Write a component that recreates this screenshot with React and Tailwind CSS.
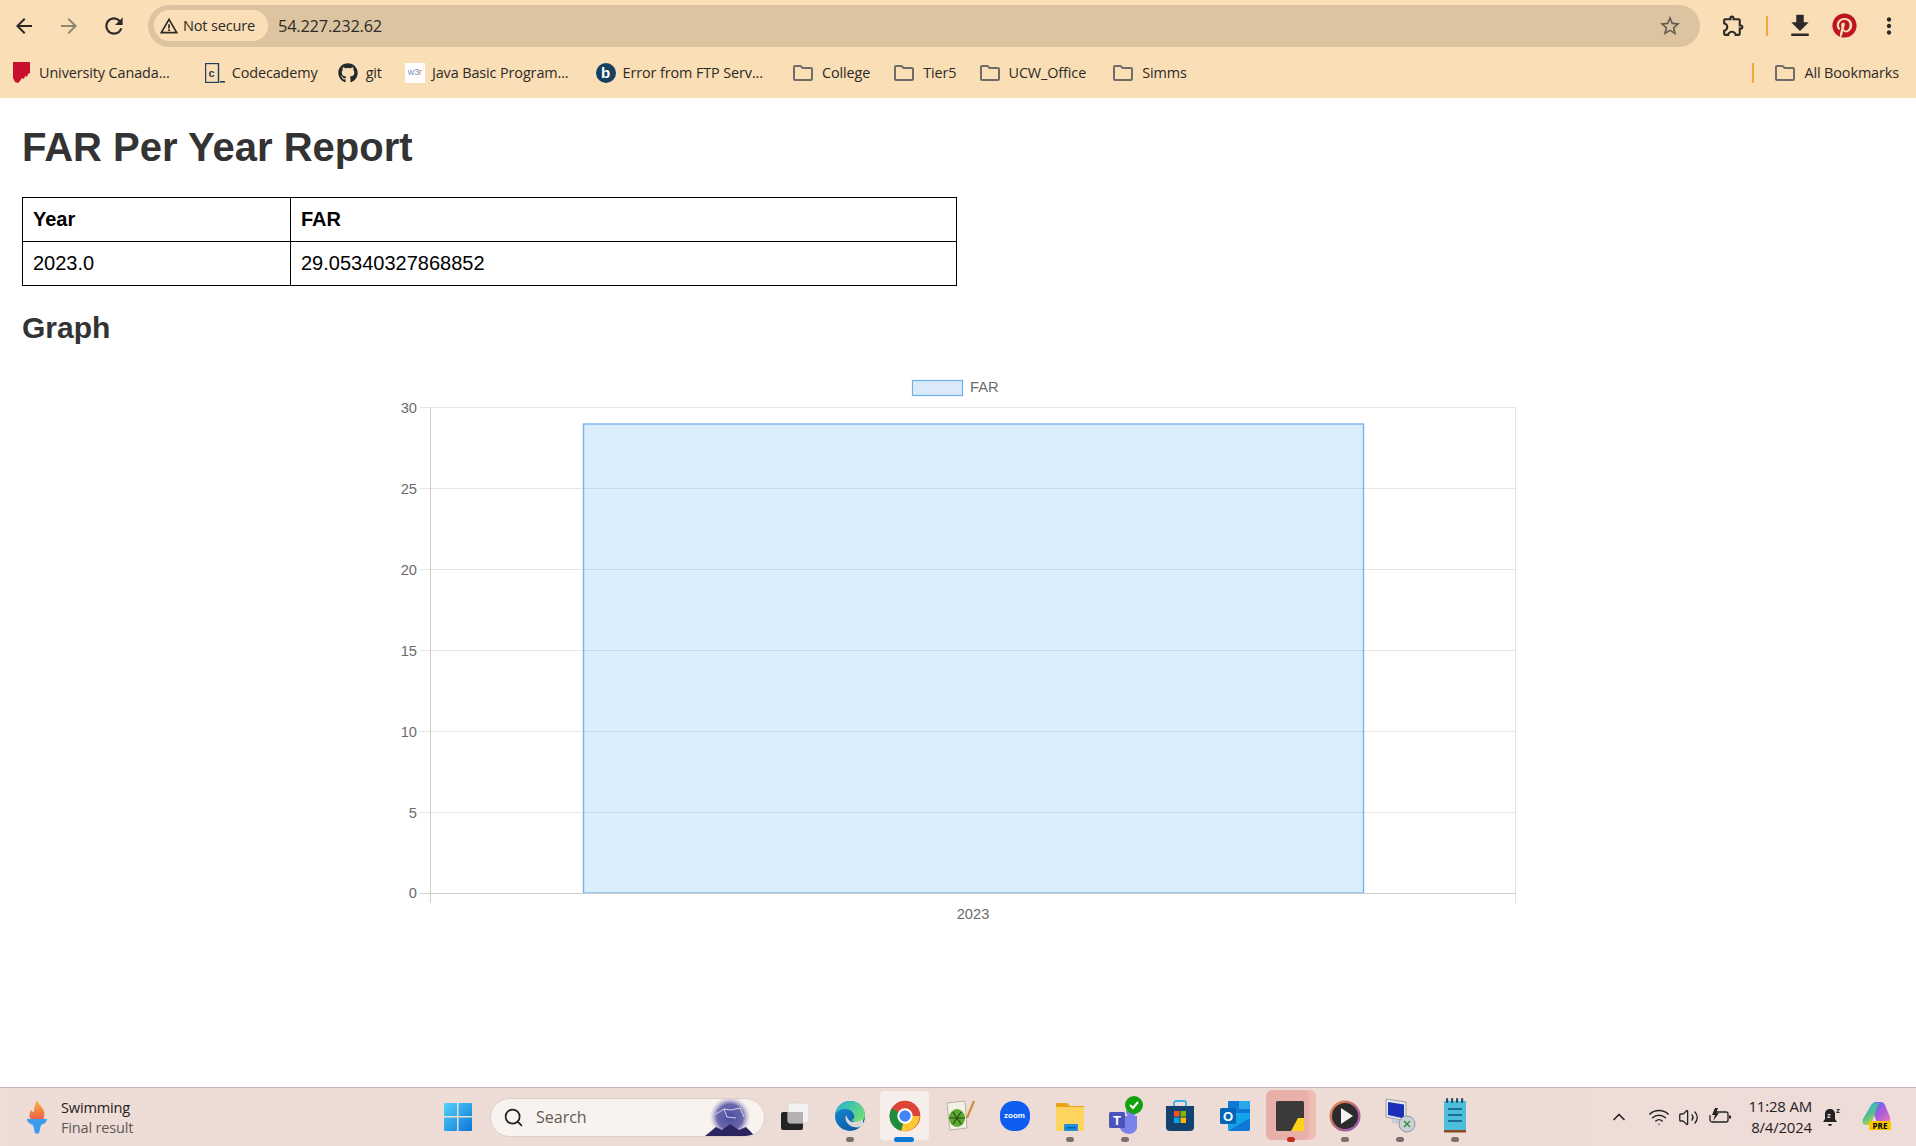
import { FaGithub, FaPinterest } from "react-icons/fa"
import {
  MdArrowBack,
  MdArrowForward,
  MdFileDownload,
  MdMoreVert,
  MdOutlineExtension,
  MdOutlineFolder,
  MdRefresh,
  MdStarBorder,
  MdWarningAmber,
} from "react-icons/md"
import { ChevronUp, Search, Wifi, Volume2 } from "lucide-react"

const uiFont = "font-['Open_Sans','Noto_Sans',sans-serif]"

function UniversityIcon() {
  return (
    <svg width="18" height="22" viewBox="0 0 18 22">
      <path d="M0 0h17v11l-2 1-1 3-2-1-1 3-2-1-2 3-2 2-3-1-2-4z" fill="#c8102e" />
    </svg>
  )
}

function CodecademyIcon() {
  return (
    <svg width="20" height="20" viewBox="0 0 20 20">
      <rect x="0.5" y="0.5" width="13" height="19" fill="none" stroke="#1f4056" strokeWidth="1.4" />
      <text x="3.5" y="14" fontSize="11" fontWeight="700" fill="#1f4056" fontFamily="Liberation Sans">c</text>
      <rect x="15" y="18" width="5" height="1.6" fill="#1f4056" />
    </svg>
  )
}

function W3Icon() {
  return (
    <div className="w-5 h-5 bg-white flex items-center justify-center text-[9px] font-['Liberation_Sans',sans-serif]">
      <span className="text-[#6b8ec7]">w3</span>
      <span className="text-[#e2735a]">r</span>
    </div>
  )
}

function BingBadge() {
  return (
    <div className="w-5 h-5 rounded-full bg-[#17405f] flex items-center justify-center text-white text-[15px] font-bold leading-none font-['Liberation_Sans',sans-serif]">
      b
    </div>
  )
}

function FolderIcon() {
  return <MdOutlineFolder className="w-6 h-6 text-[#6f6d69]" />
}

function Bookmark({ icon, label, className }) {
  return (
    <div className={`flex items-center shrink-0 ${className}`}>
      {icon}
      <span className="whitespace-nowrap">{label}</span>
    </div>
  )
}

function BrowserChrome() {
  return (
    <div className={`h-[98px] bg-[#fadeb5] shrink-0 ${uiFont} text-[#2c2a28]`}>
      <div className="h-[51px] flex items-center">
        <MdArrowBack className="w-[24px] h-[24px] ml-[12px] text-[#2b2a28]" />
        <MdArrowForward className="w-[24px] h-[24px] ml-[21px] text-[#8f8573]" />
        <MdRefresh className="w-[26px] h-[26px] ml-[20px] text-[#2b2a28]" />
        <div className="w-[1552px] h-[42px] ml-[21px] rounded-full bg-[#dcc4a1] flex items-center pl-[6px]">
          <div className="w-[114px] h-[31px] rounded-full bg-[#fadeb5] flex items-center pl-[5px] text-[14.6px] font-medium tracking-[-0.2px]">
            <MdWarningAmber className="w-[20px] h-[20px] mr-[4px]" />
            Not secure
          </div>
          <span className="ml-[10px] pt-[1px] text-[16.4px] tracking-[-0.2px]">54.227.232.62</span>
          <MdStarBorder className="w-[24px] h-[24px] ml-auto mr-[18px] text-[#615b52]" />
        </div>
        <MdOutlineExtension className="w-[25px] h-[25px] ml-[21px]" />
        <div className="w-[2px] h-[20px] ml-[20px] bg-[#f2a93c]" />
        <MdFileDownload className="w-[30px] h-[30px] ml-[17px]" />
        <FaPinterest className="w-[25px] h-[25px] ml-[17px] text-[#bd1622]" />
        <MdMoreVert className="w-[26px] h-[26px] ml-[19px]" />
      </div>
      <div className="h-[44px] flex items-center text-[14.4px] tracking-[-0.1px]">
        <Bookmark className="ml-[13px]" icon={<span className="mr-[8px] flex"><UniversityIcon /></span>} label="University Canada..." />
        <Bookmark className="ml-[35px]" icon={<span className="mr-[7px] flex"><CodecademyIcon /></span>} label="Codecademy" />
        <Bookmark className="ml-[20px]" icon={<FaGithub className="w-5 h-5 mr-[8px] text-[#24292e]" />} label="git" />
        <Bookmark className="ml-[23px]" icon={<span className="mr-[7px] flex"><W3Icon /></span>} label="Java Basic Program..." />
        <Bookmark className="ml-[27px]" icon={<span className="mr-[7px] flex"><BingBadge /></span>} label="Error from FTP Serv..." />
        <Bookmark className="ml-[28px]" icon={<span className="mr-[7px] flex"><FolderIcon /></span>} label="College" />
        <Bookmark className="ml-[22px]" icon={<span className="mr-[7px] flex"><FolderIcon /></span>} label="Tier5" />
        <Bookmark className="ml-[21px]" icon={<span className="mr-[7px] flex"><FolderIcon /></span>} label="UCW_Office" />
        <Bookmark className="ml-[25px]" icon={<span className="mr-[7px] flex"><FolderIcon /></span>} label="Simms" />
        <div className="w-[2px] h-[20px] ml-auto bg-[#f2a93c]" />
        <Bookmark className="ml-[19px] mr-[17px]" icon={<span className="mr-[7px] flex"><FolderIcon /></span>} label="All Bookmarks" />
      </div>
    </div>
  )
}

function ReportTable() {
  return (
    <table className="w-[935px] border-collapse text-[20px] text-black table-fixed">
      <thead>
        <tr className="h-[44px]">
          <th className="w-[268px] border border-black pl-[10px] pb-[2px] text-left font-bold">Year</th>
          <th className="border border-black pl-[10px] pb-[2px] text-left font-bold">FAR</th>
        </tr>
      </thead>
      <tbody>
        <tr className="h-[44px]">
          <td className="border border-black pl-[10px] pb-[2px]">2023.0</td>
          <td className="border border-black pl-[10px] pb-[2px]">29.05340327868852</td>
        </tr>
      </tbody>
    </table>
  )
}

// chart is drawn in page coordinates: viewBox starts at x 380, y 370
function FarChart() {
  const ticks = [
    { label: "30", y: 408.5 },
    { label: "25", y: 489.5 },
    { label: "20", y: 570.5 },
    { label: "15", y: 651.5 },
    { label: "10", y: 732.5 },
    { label: "5", y: 813.5 },
  ]
  return (
    <svg width="1160" height="560" viewBox="380 370 1160 560" className="ml-[358px] mt-[24px] block">
      <g fontFamily="Liberation Sans" fontSize="14.67" fill="#6b6b6b">
        <rect x="912.5" y="381.5" width="50" height="15" fill="#dbeafa" stroke="#6db0ee" strokeWidth="1.2" />
        <text x="970" y="393">FAR</text>
        {ticks.map((t) => (
          <g key={t.label}>
            <line x1="420" x2="1516" y1={t.y} y2={t.y} stroke="#e5e5e5" />
            <text x="417" y={t.y + 5} textAnchor="end">{t.label}</text>
          </g>
        ))}
        <text x="417" y="899" textAnchor="end">0</text>
        <text x="973" y="920" textAnchor="middle">2023</text>
      </g>
      <line x1="430.5" x2="430.5" y1="408" y2="904" stroke="#cfcfcf" />
      <line x1="1515.5" x2="1515.5" y1="408" y2="904" stroke="#e5e5e5" />
      <rect x="583.5" y="425" width="780" height="469" fill="rgba(70,160,235,0.19)" stroke="#78b5ee" strokeWidth="1.4" />
      <line x1="420" x2="1516" y1="894.5" y2="894.5" stroke="#cfcfcf" />
    </svg>
  )
}

function TorchIcon() {
  return (
    <svg width="24" height="34" viewBox="0 0 24 34">
      <defs>
        <linearGradient id="flame" x1="0" y1="0" x2="0" y2="1">
          <stop offset="0" stopColor="#f6b73c" />
          <stop offset="1" stopColor="#ee5d4a" />
        </linearGradient>
      </defs>
      <path d="M12 0c1 4 5 6 7 11 1 3 0 7-1 9H6c-2-3-2-7 0-10 1 1 2 2 3 2 0-4 1-8 3-12z" fill="url(#flame)" />
      <path d="M2 19h20c0 3-3 5-6 6l-2 8c-1 1-3 1-4 0l-2-8c-3-1-6-3-6-6z" fill="#3b9bec" />
    </svg>
  )
}

function WindowsIcon() {
  return (
    <svg width="30" height="30" viewBox="0 0 30 30">
      <defs>
        <linearGradient id="win" x1="0" y1="0" x2="1" y2="1">
          <stop offset="0" stopColor="#55d3fb" />
          <stop offset="1" stopColor="#0a74d6" />
        </linearGradient>
      </defs>
      <path d="M1 2a1 1 0 0 1 1-1h12v13H1zM15.500 1H28a1 1 0 0 1 1 1v12H15.500zM1 15.500h13V29H2a1 1 0 0 1-1-1zM15.500 15.500H29V28a1 1 0 0 1-1 1H15.500z" fill="url(#win)" />
    </svg>
  )
}

function NightBadge() {
  return (
    <svg width="52" height="38" viewBox="0 0 52 38">
      <defs>
        <radialGradient id="sky" cx="0.5" cy="0.5" r="0.5">
          <stop offset="0" stopColor="#4a4f9e" />
          <stop offset="0.65" stopColor="#6a68ac" />
          <stop offset="1" stopColor="#d9cfe0" stopOpacity="0.2" />
        </radialGradient>
      </defs>
      <circle cx="26" cy="19" r="20" fill="url(#sky)" />
      <path d="M12 16l8-5 7 1 9-2 4 9M20 11l3 8 9 1" stroke="#f2ecff" strokeWidth="0.8" fill="none" />
      <path d="M1 38l11-9 6 3 8-6 9 6 7-3 9 9z" fill="#2c2560" />
    </svg>
  )
}

function TaskViewIcon() {
  return (
    <svg width="30" height="30" viewBox="0 0 30 30">
      <rect x="1" y="11" width="22" height="18" rx="2" fill="#232323" />
      <rect x="8" y="2" width="21" height="20" rx="2" fill="#f4f2f1" stroke="#dcd6d3" />
      <rect x="8" y="11" width="15" height="11" fill="#aaa6a5" opacity="0.85" />
    </svg>
  )
}

function EdgeIcon() {
  return (
    <svg width="32" height="32" viewBox="0 0 32 32">
      <defs>
        <linearGradient id="edgeA" x1="0" y1="0" x2="1" y2="0.6">
          <stop offset="0" stopColor="#1fb0d8" />
          <stop offset="1" stopColor="#6fdc7a" />
        </linearGradient>
        <linearGradient id="edgeB" x1="0" y1="0" x2="0.6" y2="1">
          <stop offset="0" stopColor="#1a8fd8" />
          <stop offset="1" stopColor="#0a5ca8" />
        </linearGradient>
      </defs>
      <circle cx="16" cy="16" r="15" fill="url(#edgeB)" />
      <path d="M1.500 14C3 6 9 1 16 1c8 0 15 6 15 14 0 5-4 7-8 7-3 0-5-1-5-2 2-1 3-3 2-5-1-4-5-6-9-6-4 0-8 2-10 5z" fill="url(#edgeA)" />
      <path d="M12 15c-2 5 2 11 8 12 3 1 7 0 9-2v-6c-3 3-8 3-11 3-3-1-5-4-6-7z" fill="#f1e2dc" opacity="0.9" />
    </svg>
  )
}

function ChromeIcon() {
  return (
    <svg width="32" height="32" viewBox="0 0 48 48">
      <circle cx="24" cy="24" r="23" fill="#db4437" />
      <path d="M24 24h22A23 23 0 0 1 18 46.300z" fill="#fcc934" />
      <path d="M24 24 18 46.300A23 23 0 0 1 4 12.500z" fill="#1e8e3e" />
      <circle cx="24" cy="24" r="11.500" fill="#fff" />
      <circle cx="24" cy="24" r="8.500" fill="#4285f4" />
    </svg>
  )
}

function NotepadPlusIcon() {
  return (
    <svg width="32" height="34" viewBox="0 0 32 34">
      <path d="M3 4l18-2 2 27-17 2z" fill="#f3f1e6" stroke="#b9b4a4" />
      <ellipse cx="13" cy="19" rx="8" ry="9" fill="#5aa82f" />
      <path d="M9 13l8 12M17 13l-8 12M5 19h16" stroke="#274d14" strokeWidth="1.2" />
      <path d="M30 2l-7 17" stroke="#c98a34" strokeWidth="2" />
    </svg>
  )
}

function ZoomIcon() {
  return (
    <div className="w-[30px] h-[30px] rounded-[45%] bg-[#0f5cf0] flex items-center justify-center text-white text-[8px] font-bold font-['Liberation_Sans',sans-serif]">
      zoom
    </div>
  )
}

function FilesIcon() {
  return (
    <svg width="32" height="32" viewBox="0 0 32 32">
      <path d="M2 3h11l3 3h14v6H2z" fill="#e8a317" />
      <rect x="2" y="7" width="28" height="24" fill="#fcd45e" />
      <rect x="10" y="24" width="14" height="7" rx="1" fill="#1b8fe0" />
      <rect x="12" y="27" width="10" height="1.500" fill="#0d5ea6" />
    </svg>
  )
}

function TeamsIcon() {
  return (
    <svg width="36" height="40" viewBox="0 0 36 40">
      <circle cx="24" cy="16" r="5" fill="#7b83eb" />
      <path d="M13 20h17v11c0 4-4 7-8 7s-9-3-9-7z" fill="#7b83eb" />
      <rect x="2" y="16" width="16" height="16" rx="1.500" fill="#4b53bc" />
      <text x="10" y="29" textAnchor="middle" fontSize="13" fontWeight="700" fill="#fff" fontFamily="Liberation Sans">T</text>
      <circle cx="27" cy="9" r="9" fill="#13a10e" />
      <path d="M23 9l3 3 5-6" stroke="#fff" strokeWidth="2" fill="none" />
    </svg>
  )
}

function StoreIcon() {
  return (
    <svg width="30" height="32" viewBox="0 0 30 32">
      <path d="M9 6V3a2 2 0 0 1 2-2h8a2 2 0 0 1 2 2v3" stroke="#3bb1e6" strokeWidth="1.800" fill="none" />
      <path d="M1 6h28v21a4 4 0 0 1-4 4H5a4 4 0 0 1-4-4z" fill="#14426f" />
      <rect x="9" y="11" width="5.500" height="5.500" fill="#f25022" />
      <rect x="15.500" y="11" width="5.500" height="5.500" fill="#7fba00" />
      <rect x="9" y="17.500" width="5.500" height="5.500" fill="#00a4ef" />
      <rect x="15.500" y="17.500" width="5.500" height="5.500" fill="#ffb900" />
    </svg>
  )
}

function OutlookIcon() {
  return (
    <svg width="32" height="32" viewBox="0 0 32 32">
      <rect x="9" y="1" width="22" height="16" rx="1" fill="#0f78d4" />
      <rect x="20" y="1" width="11" height="8" fill="#28a8ea" />
      <path d="M9 13l22 0v16a2 2 0 0 1-2 2H11a2 2 0 0 1-2-2z" fill="#14a3e8" />
      <path d="M9 31l22-13v11a2 2 0 0 1-2 2z" fill="#0f78d4" />
      <rect x="1" y="8" width="16" height="16" rx="1.500" fill="#0364b8" />
      <text x="9" y="21" textAnchor="middle" fontSize="13" fontWeight="700" fill="#fff" fontFamily="Liberation Sans">O</text>
    </svg>
  )
}

function StickyIcon() {
  return (
    <svg width="28" height="30" viewBox="0 0 28 30">
      <rect width="28" height="30" rx="1.500" fill="#3b3a39" />
      <path d="M15 30l7-13h6v13z" fill="#fcd116" />
    </svg>
  )
}

function PlayerIcon() {
  return (
    <svg width="32" height="32" viewBox="0 0 32 32">
      <defs>
        <linearGradient id="ring" x1="0" y1="0" x2="1" y2="1">
          <stop offset="0" stopColor="#f08a3c" />
          <stop offset="1" stopColor="#8a4fc4" />
        </linearGradient>
      </defs>
      <circle cx="16" cy="16" r="15.500" fill="url(#ring)" />
      <circle cx="16" cy="16" r="13" fill="#2c2b2b" />
      <path d="M12 8l12 8-12 8z" fill="#f4f4f4" />
    </svg>
  )
}

function RemoteIcon() {
  return (
    <svg width="32" height="36" viewBox="0 0 32 36">
      <path d="M2 1l20 3v19L2 19z" fill="#e5e7ea" stroke="#9aa0a6" />
      <path d="M4 4l16 2.500v14L4 17z" fill="#1b2fb8" />
      <path d="M8 21l8 1v4l-8-1z" fill="#c8ccd0" />
      <circle cx="23" cy="26" r="8" fill="#c9d1d3" stroke="#8e9a9c" />
      <path d="M20 23l3 3-3 3M26 23l-3 3 3 3" stroke="#2f8a3a" strokeWidth="1.300" fill="none" />
    </svg>
  )
}

function NotepadIcon() {
  return (
    <svg width="24" height="36" viewBox="0 0 24 36">
      <rect x="1" y="3" width="22" height="29" fill="#4dbfdc" />
      <rect x="1" y="32" width="22" height="2.500" fill="#8a4b22" />
      <g fill="#23506a">
        <rect x="3" y="0" width="2.200" height="5" rx="1" />
        <rect x="8" y="0" width="2.200" height="5" rx="1" />
        <rect x="13" y="0" width="2.200" height="5" rx="1" />
        <rect x="18" y="0" width="2.200" height="5" rx="1" />
      </g>
      <g fill="#1f6d8e">
        <rect x="5" y="10" width="14" height="2" />
        <rect x="5" y="16" width="14" height="2" />
        <rect x="5" y="22" width="14" height="2" />
      </g>
    </svg>
  )
}

function BatteryIcon() {
  return (
    <svg width="22" height="20" viewBox="0 0 22 20" fill="none" stroke="#222" strokeWidth="1.300">
      <path d="M7 5h10a2 2 0 0 1 2 2v6a2 2 0 0 1-2 2H3a2 2 0 0 1-2-2V8" />
      <path d="M21 8.500v3" strokeWidth="2" />
      <path d="M6 1 3 8h3l-2 6 6-8H7l2-5z" fill="#222" stroke="none" />
    </svg>
  )
}

function SnoozeBell() {
  return (
    <svg width="20" height="24" viewBox="0 0 20 24">
      <path d="M8 4c3 0 5 2 5 5v5l2 3H1l2-3V9c0-3 2-5 5-5zM6 19h4a2 2 0 0 1-4 0z" fill="#222" />
      <text x="5" y="13" fontSize="7.500" fontWeight="700" fill="#eedcd6" fontFamily="Liberation Sans">z</text>
      <text x="14" y="8" fontSize="8" fontWeight="700" fill="#222" fontFamily="Liberation Sans">z</text>
    </svg>
  )
}

function CopilotIcon() {
  return (
    <svg width="30" height="24" viewBox="0 0 30 24">
      <defs>
        <linearGradient id="copL" x1="0" y1="0" x2="0.6" y2="1">
          <stop offset="0" stopColor="#2aa7f0" />
          <stop offset="0.55" stopColor="#4fc28a" />
          <stop offset="1" stopColor="#d4d64a" />
        </linearGradient>
        <linearGradient id="copR" x1="0" y1="0" x2="1" y2="1">
          <stop offset="0" stopColor="#3a6ff0" />
          <stop offset="0.5" stopColor="#a65be0" />
          <stop offset="1" stopColor="#ee7ab4" />
        </linearGradient>
      </defs>
      <path d="M9 4C10 2 12 0 14 0h5c2 0 3 1 4 3l5 12c1 3-1 6-4 6h-6c-2 0-3-1-4-3z" fill="url(#copR)" />
      <path d="M8 5c1-2 2-4 5-4h6c-2 0-3 2-4 4l-4 12c-1 3-2 6-5 6H4c-3 0-4-3-3-6z" fill="url(#copL)" />
    </svg>
  )
}

function TaskIcon({ children, active, dot }) {
  return (
    <div className="relative w-[55px] h-[54px] flex items-center justify-center">
      {active === "chrome" && (
        <div className="absolute left-[3px] top-[1px] w-[49px] h-[49px] rounded-[4px] bg-[#f6eeea]" />
      )}
      {active === "sticky" && (
        <>
          <div className="absolute left-[11px] top-0 w-[43px] h-[50px] rounded-[6px] bg-[#f0bdb4]" />
          <div className="absolute left-[4px] top-0 w-[43px] h-[50px] rounded-[6px] bg-[#e9b0aa]" />
        </>
      )}
      <div className="relative mb-[3px] flex">{children}</div>
      {dot === "gray" && <div className="absolute left-[24px] bottom-[2px] w-[8px] h-[5px] rounded-full bg-[#77706d]" />}
      {dot === "blue" && <div className="absolute left-[17px] bottom-[2px] w-[20px] h-[5px] rounded-full bg-[#0a78d4]" />}
      {dot === "red" && <div className="absolute left-[25px] bottom-[2px] w-[8px] h-[5px] rounded-full bg-[#c42b1c]" />}
    </div>
  )
}

function Taskbar() {
  return (
    <div className={`h-[59px] shrink-0 border-t border-[#c9b8b2] bg-[linear-gradient(90deg,#eedcd6_0%,#eddcd5_50%,#eedcd8_100%)] flex items-center ${uiFont} text-[#24211f]`}>
      <div className="ml-[25px] flex"><TorchIcon /></div>
      <div className="ml-[12px] w-[120px] pb-[1px] text-[14.6px] leading-[20px] tracking-[-0.2px]">
        <div>Swimming</div>
        <div className="text-[#5f5a57]">Final result</div>
      </div>
      <div className="ml-[262px] flex"><WindowsIcon /></div>
      <div className="w-[275px] h-[39px] ml-[17px] rounded-full bg-[#f9f3ef] border border-[#dccfca] flex items-center pl-[12px] overflow-hidden">
        <Search className="w-[21px] h-[21px] text-[#222]" strokeWidth={2} />
        <span className="ml-[12px] text-[16px] text-[#5f5a57]">Search</span>
        <div className="ml-auto mr-[8px] flex"><NightBadge /></div>
      </div>
      <div className="ml-[2px] flex items-center">
        <TaskIcon><TaskViewIcon /></TaskIcon>
        <TaskIcon dot="gray"><EdgeIcon /></TaskIcon>
        <TaskIcon active="chrome" dot="blue"><ChromeIcon /></TaskIcon>
        <TaskIcon><NotepadPlusIcon /></TaskIcon>
        <TaskIcon><ZoomIcon /></TaskIcon>
        <TaskIcon dot="gray"><FilesIcon /></TaskIcon>
        <TaskIcon dot="gray"><TeamsIcon /></TaskIcon>
        <TaskIcon><StoreIcon /></TaskIcon>
        <TaskIcon><OutlookIcon /></TaskIcon>
        <TaskIcon active="sticky" dot="red"><StickyIcon /></TaskIcon>
        <TaskIcon dot="gray"><PlayerIcon /></TaskIcon>
        <TaskIcon dot="gray"><RemoteIcon /></TaskIcon>
        <TaskIcon dot="gray"><NotepadIcon /></TaskIcon>
      </div>
      <ChevronUp className="w-[20px] h-[20px] ml-[127px] text-[#222]" />
      <Wifi className="w-[22px] h-[22px] ml-[19px] text-[#222]" strokeWidth={1.6} />
      <Volume2 className="w-[21px] h-[21px] ml-[8px] text-[#222]" strokeWidth={1.5} />
      <div className="ml-[10px] flex"><BatteryIcon /></div>
      <div className="w-[66px] ml-[15px] text-right text-[15px] leading-[21px] tracking-[-0.2px] whitespace-nowrap">
        <div>11:28 AM</div>
        <div>8/4/2024</div>
      </div>
      <div className="ml-[10px] flex"><SnoozeBell /></div>
      <div className="relative ml-[20px] w-[30px] h-[30px]">
        <CopilotIcon />
        <div className="absolute left-[7px] top-[19px] w-[22px] h-[9px] bg-[#f7c600] rounded-[1px] text-[8px] leading-[9px] font-bold text-center text-black">PRE</div>
      </div>
    </div>
  )
}

export default function App() {
  return (
    <div className="w-[1916px] h-[1146px] flex flex-col overflow-hidden bg-white font-['Liberation_Sans',Arial,sans-serif]">
      <BrowserChrome />
      <main className="flex-1 min-h-0 px-[22px] overflow-hidden">
        <h1 className="mt-[26px] mb-[27px] text-[40px] leading-[46px] font-bold text-[#333]">FAR Per Year Report</h1>
        <ReportTable />
        <h2 className="mt-[25px] text-[30px] leading-[34px] font-bold text-[#333]">Graph</h2>
        <FarChart />
      </main>
      <Taskbar />
    </div>
  )
}
